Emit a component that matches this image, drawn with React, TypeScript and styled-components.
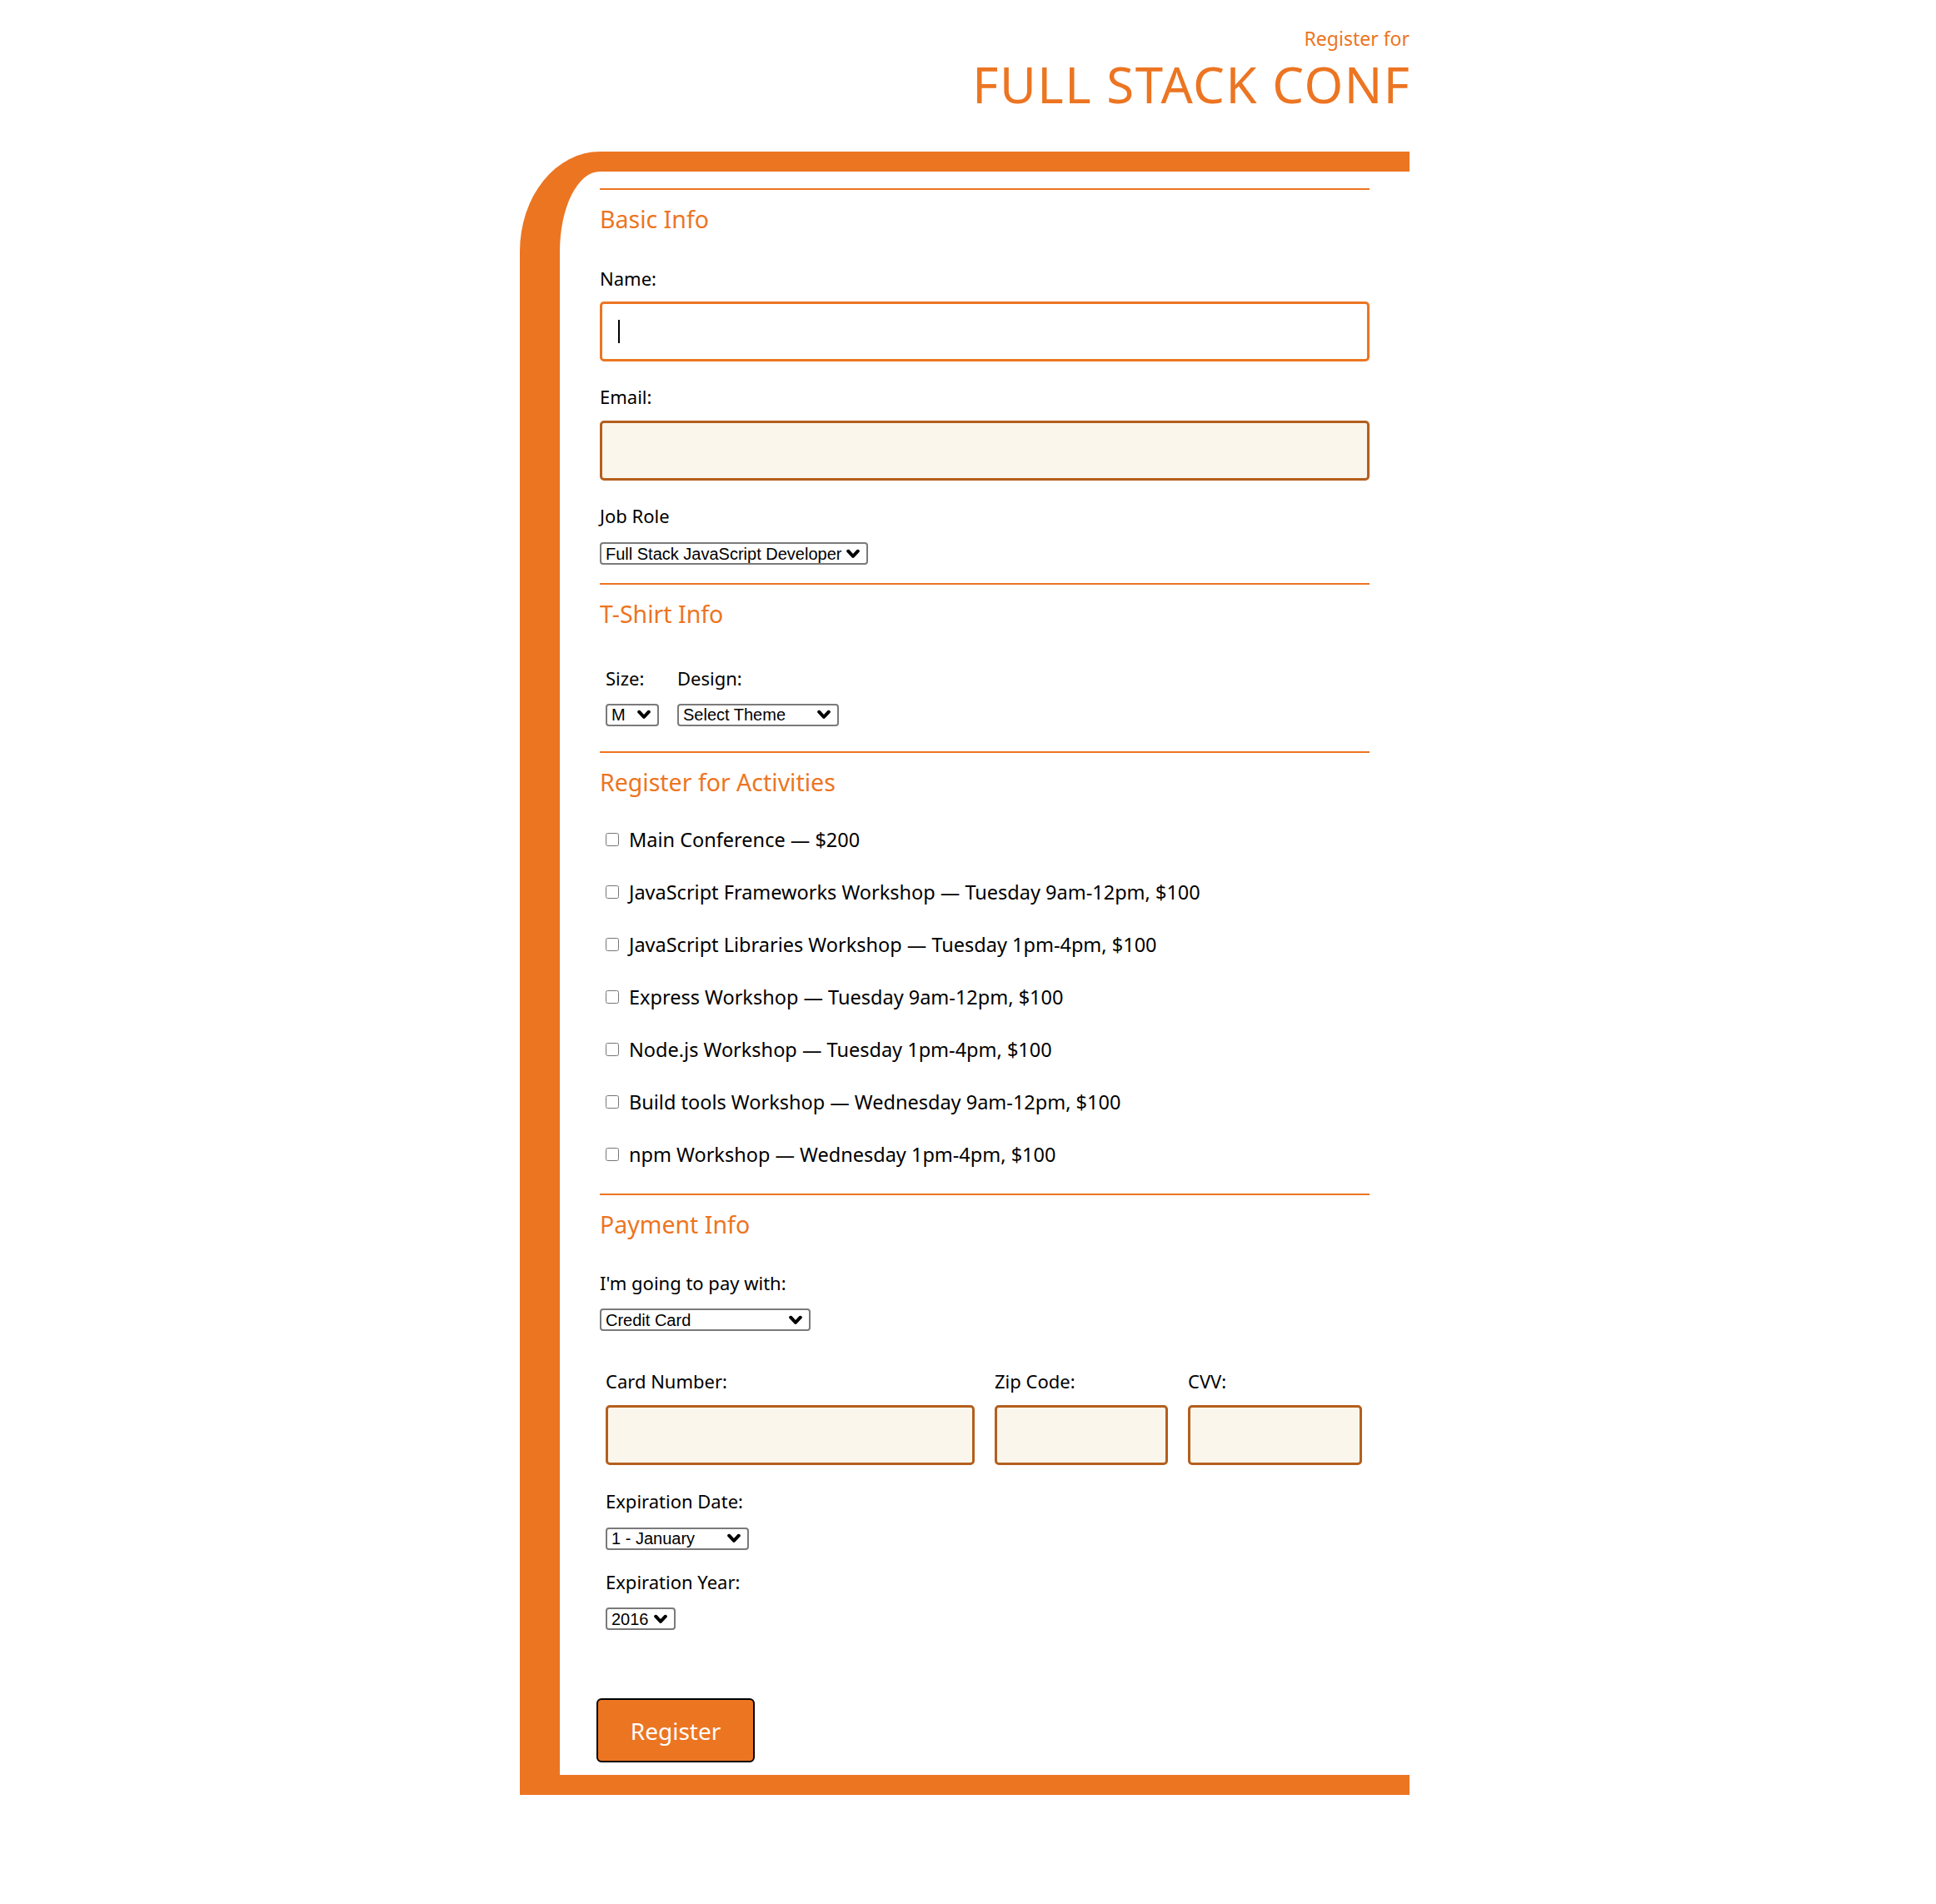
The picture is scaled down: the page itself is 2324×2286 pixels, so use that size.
import React from "react";
import styled, { createGlobalStyle, css } from "styled-components";

const ORANGE = "#EC7522";
const BROWN = "#B45F1E";
const CREAM = "#FAF6EB";

const GlobalStyle = createGlobalStyle`
  html, body {
    margin: 0;
    padding: 0;
    background: #ffffff;
  }
  body {
    font-family: "Noto Sans", "Open Sans", sans-serif;
    color: #000;
  }
  * { box-sizing: border-box; }
`;

const Page = styled.div`
  width: 1068px;
  margin-left: calc(50% - 538px);
  padding-top: 31px;
  padding-bottom: 130px;
`;

const Kicker = styled.p`
  margin: 0;
  font-size: 23px;
  line-height: 30px;
  color: ${ORANGE};
  text-align: right;
`;

const Headline = styled.h1`
  margin: 8px -1.5px 0 0;
  font-size: 60px;
  line-height: 64px;
  font-weight: 400;
  letter-spacing: 1.5px;
  color: ${ORANGE};
  text-align: right;
`;

const Form = styled.form`
  margin-top: 49px;
  background: #fff;
  border-style: solid;
  border-color: ${ORANGE};
  border-width: 24px 0 24px 48px;
  border-top-left-radius: 96px 120px;
  padding: 20px 48px 14.5px;
`;

const Section = styled.section<{ $pb: number }>`
  border-top: 2px solid ${ORANGE};
  padding-top: 16px;
  padding-bottom: ${(p) => p.$pb}px;
`;

const SectionTitle = styled.h2`
  margin: 0;
  font-size: 28.5px;
  line-height: 38px;
  font-weight: 400;
  color: ${ORANGE};
`;

const FieldLabel = styled.label<{ $mt: number }>`
  display: block;
  margin-top: ${(p) => p.$mt}px;
  font-size: 22px;
  line-height: 30px;
  color: #000;
`;

const InputWrap = styled.div<{ $mt: number }>`
  position: relative;
  margin-top: ${(p) => p.$mt}px;
`;

const TextInput = styled.input<{ $active?: boolean }>`
  display: block;
  width: 100%;
  height: 72px;
  margin: 0;
  padding: 0 18px;
  font-family: "Noto Sans", sans-serif;
  font-size: 22px;
  color: #000;
  border: 3px solid ${BROWN};
  border-radius: 5px;
  background: ${CREAM};
  outline: none;
  caret-color: #000;
  ${(p) =>
    p.$active &&
    css`
      border-color: ${ORANGE};
      background: #fff;
    `}
  &:focus {
    border-color: ${ORANGE};
    background: #fff;
  }
`;

const Caret = styled.span`
  position: absolute;
  left: 22px;
  top: 22px;
  width: 2px;
  height: 28px;
  background: #000;
  pointer-events: none;
`;

const SelectWrap = styled.div<{ $mt: number; $w: number }>`
  position: relative;
  width: ${(p) => p.$w}px;
  height: 27px;
  margin-top: ${(p) => p.$mt}px;
`;

const NativeSelect = styled.select`
  appearance: none;
  -webkit-appearance: none;
  display: block;
  width: 100%;
  height: 100%;
  margin: 0;
  padding: 0 28px 0 5px;
  font-family: "Liberation Sans", Arial, sans-serif;
  font-size: 20px;
  color: #000;
  background: #fff;
  border: 2px solid #7a7a7a;
  border-radius: 4px;
  outline: none;
`;

const Chevron = styled.svg`
  position: absolute;
  right: 10px;
  top: 50%;
  transform: translateY(-50%);
  pointer-events: none;
`;

type SelectProps = {
  width: number;
  mt: number;
  options: string[];
  id?: string;
};

function Select({ width, mt, options, id }: SelectProps) {
  return (
    <SelectWrap $mt={mt} $w={width}>
      <NativeSelect id={id} defaultValue={options[0]}>
        {options.map((o) => (
          <option key={o} value={o}>
            {o}
          </option>
        ))}
      </NativeSelect>
      <Chevron width="16" height="11" viewBox="0 0 16 11" aria-hidden="true">
        <polyline
          points="2.2,2.2 8,8.4 13.8,2.2"
          fill="none"
          stroke="#000"
          strokeWidth="4"
          strokeLinecap="round"
          strokeLinejoin="round"
        />
      </Chevron>
    </SelectWrap>
  );
}

const ShirtRow = styled.div`
  display: flex;
  gap: 22px;
  padding-left: 7px;
  margin-top: 43px;
`;

const ShirtCol = styled.div`
  display: flex;
  flex-direction: column;
`;

const InlineLabel = styled.label`
  font-size: 22px;
  line-height: 30px;
  color: #000;
`;

const ActivityList = styled.div`
  display: flex;
  flex-direction: column;
  gap: 33px;
  margin-top: 35px;
  padding-left: 7px;
`;

const ActivityRow = styled.label`
  display: flex;
  align-items: center;
  gap: 12px;
  height: 30px;
  font-size: 23.5px;
  line-height: 30px;
  color: #000;
`;

const Checkbox = styled.input`
  width: 16px;
  height: 16px;
  margin: 0;
  flex: none;
`;

const CardBlock = styled.div`
  padding-left: 7px;
`;

const CardGrid = styled.div`
  display: grid;
  grid-template-columns: 443px 208px 209px;
  column-gap: 24px;
  margin-top: 45px;
`;

const CardField = styled.div`
  display: flex;
  flex-direction: column;
`;

const SubmitButton = styled.button`
  display: block;
  width: 190px;
  height: 77px;
  margin: 82px 0 0 -4px;
  padding: 0;
  background: ${ORANGE};
  color: #fff;
  border: 2px solid #000;
  border-radius: 6px;
  font-family: "Noto Sans", sans-serif;
  font-size: 28px;
  cursor: pointer;
`;

const activities = [
  "Main Conference — $200",
  "JavaScript Frameworks Workshop — Tuesday 9am-12pm, $100",
  "JavaScript Libraries Workshop — Tuesday 1pm-4pm, $100",
  "Express Workshop — Tuesday 9am-12pm, $100",
  "Node.js Workshop — Tuesday 1pm-4pm, $100",
  "Build tools Workshop — Wednesday 9am-12pm, $100",
  "npm Workshop — Wednesday 1pm-4pm, $100",
];

const months = [
  "1 - January",
  "2 - February",
  "3 - March",
  "4 - April",
  "5 - May",
  "6 - June",
  "7 - July",
  "8 - August",
  "9 - September",
  "10 - October",
  "11 - November",
  "12 - December",
];

export default function App() {
  return (
    <>
      <GlobalStyle />
      <Page>
        <Kicker>Register for</Kicker>
        <Headline>FULL STACK CONF</Headline>
        <Form onSubmit={(e) => e.preventDefault()}>
          <Section $pb={22}>
            <SectionTitle>Basic Info</SectionTitle>
            <FieldLabel $mt={36.5} htmlFor="name">
              Name:
            </FieldLabel>
            <InputWrap $mt={13.5}>
              <TextInput id="name" type="text" $active />
              <Caret />
            </InputWrap>
            <FieldLabel $mt={27} htmlFor="mail">
              Email:
            </FieldLabel>
            <InputWrap $mt={14}>
              <TextInput id="mail" type="email" />
            </InputWrap>
            <FieldLabel $mt={27} htmlFor="title">
              Job Role
            </FieldLabel>
            <Select
              id="title"
              width={322}
              mt={17}
              options={["Full Stack JavaScript Developer", "Front End Developer", "Back End Developer", "Designer", "Student", "Other"]}
            />
          </Section>

          <Section $pb={30}>
            <SectionTitle>T-Shirt Info</SectionTitle>
            <ShirtRow>
              <ShirtCol>
                <InlineLabel htmlFor="size">Size:</InlineLabel>
                <Select id="size" width={64} mt={15.5} options={["M", "S", "L", "XL"]} />
              </ShirtCol>
              <ShirtCol>
                <InlineLabel htmlFor="design">Design:</InlineLabel>
                <Select
                  id="design"
                  width={194}
                  mt={15.5}
                  options={["Select Theme", "Theme - JS Puns", "Theme - I ♥ JS"]}
                />
              </ShirtCol>
            </ShirtRow>
          </Section>

          <Section $pb={32.5}>
            <SectionTitle>Register for Activities</SectionTitle>
            <ActivityList>
              {activities.map((a) => (
                <ActivityRow key={a}>
                  <Checkbox type="checkbox" />
                  {a}
                </ActivityRow>
              ))}
            </ActivityList>
          </Section>

          <Section $pb={0}>
            <SectionTitle>Payment Info</SectionTitle>
            <FieldLabel $mt={36} htmlFor="payment">
              I'm going to pay with:
            </FieldLabel>
            <Select
              id="payment"
              width={253}
              mt={16}
              options={["Credit Card", "PayPal", "Bitcoin"]}
            />
            <CardBlock>
              <CardGrid>
                <CardField>
                  <InlineLabel htmlFor="cc-num">Card Number:</InlineLabel>
                  <InputWrap $mt={14}>
                    <TextInput id="cc-num" type="text" />
                  </InputWrap>
                </CardField>
                <CardField>
                  <InlineLabel htmlFor="zip">Zip Code:</InlineLabel>
                  <InputWrap $mt={14}>
                    <TextInput id="zip" type="text" />
                  </InputWrap>
                </CardField>
                <CardField>
                  <InlineLabel htmlFor="cvv">CVV:</InlineLabel>
                  <InputWrap $mt={14}>
                    <TextInput id="cvv" type="text" />
                  </InputWrap>
                </CardField>
              </CardGrid>
              <FieldLabel $mt={28} htmlFor="exp-month">
                Expiration Date:
              </FieldLabel>
              <Select id="exp-month" width={172} mt={16.5} options={months} />
              <FieldLabel $mt={23} htmlFor="exp-year">
                Expiration Year:
              </FieldLabel>
              <Select
                id="exp-year"
                width={84}
                mt={16.5}
                options={["2016", "2017", "2018", "2019", "2020"]}
              />
            </CardBlock>
            <SubmitButton type="submit">Register</SubmitButton>
          </Section>
        </Form>
      </Page>
    </>
  );
}
